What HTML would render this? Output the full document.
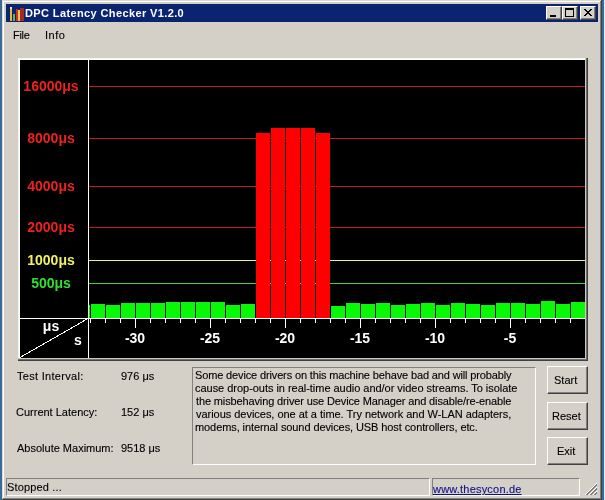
<!DOCTYPE html>
<html><head><meta charset="utf-8">
<style>
*{margin:0;padding:0;box-sizing:border-box}
html,body{width:605px;height:500px;overflow:hidden;background:#3a6a98;font-family:"Liberation Sans",sans-serif;font-size:11px;color:#000}
.a{position:absolute}
.t{will-change:transform;-webkit-text-stroke:0.12px currentColor;position:absolute;white-space:pre;line-height:13px;font-size:11px}
</style></head><body>
<!-- window frame -->
<div class="a" style="left:2px;top:0;width:600px;height:500px;background:#d4d0c8"></div>
<div class="a" style="left:2px;top:0;width:599px;height:1px;background:#dedad2"></div>
<div class="a" style="left:2px;top:0;width:1px;height:499px;background:#dedad2"></div>
<div class="a" style="left:3px;top:1px;width:597px;height:1px;background:#fff"></div>
<div class="a" style="left:3px;top:1px;width:1px;height:497px;background:#fff"></div>
<div class="a" style="left:600px;top:1px;width:1px;height:498px;background:#808080"></div>
<div class="a" style="left:3px;top:498px;width:598px;height:1px;background:#808080"></div>
<div class="a" style="left:601px;top:0;width:1px;height:500px;background:#404040"></div>
<div class="a" style="left:2px;top:499px;width:600px;height:1px;background:#404040"></div>
<div class="a" style="left:604px;top:0;width:1px;height:500px;background:#dfeef2"></div>

<!-- title bar -->
<div class="a" style="left:6px;top:4px;width:592px;height:18px;background:#0b2470"></div>
<svg class="a" style="left:6px;top:4px" width="20" height="18" shape-rendering="crispEdges">
  <rect x="4" y="3" width="2" height="14" fill="#e0b840"/>
  <rect x="4" y="3" width="2" height="2" fill="#f0e0b0"/>
  <rect x="7" y="10" width="2" height="7" fill="#70b040"/>
  <rect x="10" y="5" width="2" height="12" fill="#c83020"/>
  <rect x="12" y="6" width="2" height="11" fill="#f0c050"/>
  <rect x="14" y="4" width="4" height="13" fill="#a82828"/>
</svg>
<div class="t" style="left:25px;top:7px;color:#fff;font-weight:bold;letter-spacing:0.38px;-webkit-text-stroke:0">DPC Latency Checker V1.2.0</div>
<!-- caption buttons -->
<div class="a" style="left:546px;top:6px;width:16px;height:14px;background:#d4d0c8;border-top:1px solid #fff;border-left:1px solid #fff;border-right:1px solid #404040;border-bottom:1px solid #404040;box-shadow:inset -1px -1px 0 #808080"></div>
<div class="a" style="left:550px;top:15px;width:6px;height:2px;background:#000"></div>
<div class="a" style="left:562px;top:6px;width:16px;height:14px;background:#d4d0c8;border-top:1px solid #fff;border-left:1px solid #fff;border-right:1px solid #404040;border-bottom:1px solid #404040;box-shadow:inset -1px -1px 0 #808080"></div>
<div class="a" style="left:565px;top:8px;width:9px;height:9px;border:1px solid #000;border-top-width:2px"></div>
<div class="a" style="left:580px;top:6px;width:16px;height:14px;background:#d4d0c8;border-top:1px solid #fff;border-left:1px solid #fff;border-right:1px solid #404040;border-bottom:1px solid #404040;box-shadow:inset -1px -1px 0 #808080"></div>
<svg class="a" style="left:584px;top:9px" width="8" height="7" shape-rendering="crispEdges">
  <path d="M0 0h2v1h-2zM6 0h2v1h-2zM1 1h2v1h-2zM5 1h2v1h-2zM2 2h4v1h-4zM3 3h2v1h-2zM2 4h4v1h-4zM1 5h2v1h-2zM5 5h2v1h-2zM0 6h2v1h-2zM6 6h2v1h-2z" fill="#000"/>
</svg>

<!-- menu -->
<div class="t" style="left:13px;top:29px;letter-spacing:-0.3px">File</div>
<div class="t" style="left:45px;top:29px;letter-spacing:0.5px">Info</div>

<!-- chart frame -->
<div class="a" style="left:18px;top:58px;width:570px;height:303px;background:#404040"></div>
<div class="a" style="left:18px;top:58px;width:569px;height:302px;background:#707070"></div>
<div class="a" style="left:18px;top:58px;width:568px;height:301px;background:#c8c8c4"></div>
<div class="a" style="left:18px;top:58px;width:567px;height:300px;background:#f4f4f0"></div>
<div class="a" style="left:19px;top:59px;width:566px;height:299px;background:#fff"></div>

<svg class="a" style="left:20px;top:60px" width="565" height="298" shape-rendering="crispEdges">
  <rect x="0" y="0" width="565" height="298" fill="#000"/>
  <g transform="translate(-20,-60)">
  <!-- grid -->
  <rect x="89" y="86" width="496" height="1" fill="#c01c20"/>
  <rect x="89" y="138" width="496" height="1" fill="#c01c20"/>
  <rect x="89" y="186" width="496" height="1" fill="#c01c20"/>
  <rect x="89" y="227" width="496" height="1" fill="#c01c20"/>
  <rect x="89" y="260" width="496" height="1" fill="#f0f080"/>
  <rect x="89" y="283" width="496" height="1" fill="#40d040"/>
  <g><rect x="89" y="305" width="1" height="13" fill="#08f808"/><rect x="91" y="304" width="14" height="14" fill="#08f808"/><rect x="106" y="305" width="14" height="13" fill="#08f808"/><rect x="121" y="303" width="14" height="15" fill="#08f808"/><rect x="136" y="303" width="14" height="15" fill="#08f808"/><rect x="151" y="303" width="14" height="15" fill="#08f808"/><rect x="166" y="302" width="14" height="16" fill="#08f808"/><rect x="181" y="302" width="14" height="16" fill="#08f808"/><rect x="196" y="302" width="14" height="16" fill="#08f808"/><rect x="211" y="302" width="14" height="16" fill="#08f808"/><rect x="226" y="305" width="14" height="13" fill="#08f808"/><rect x="241" y="304" width="14" height="14" fill="#08f808"/><rect x="256" y="133" width="14" height="185" fill="#ff0000"/><rect x="271" y="128" width="14" height="190" fill="#ff0000"/><rect x="286" y="128" width="14" height="190" fill="#ff0000"/><rect x="301" y="128" width="14" height="190" fill="#ff0000"/><rect x="316" y="133" width="14" height="185" fill="#ff0000"/><rect x="331" y="306" width="14" height="12" fill="#08f808"/><rect x="346" y="303" width="14" height="15" fill="#08f808"/><rect x="361" y="304" width="14" height="14" fill="#08f808"/><rect x="376" y="303" width="14" height="15" fill="#08f808"/><rect x="391" y="305" width="14" height="13" fill="#08f808"/><rect x="406" y="304" width="14" height="14" fill="#08f808"/><rect x="421" y="303" width="14" height="15" fill="#08f808"/><rect x="436" y="305" width="14" height="13" fill="#08f808"/><rect x="451" y="303" width="14" height="15" fill="#08f808"/><rect x="466" y="304" width="14" height="14" fill="#08f808"/><rect x="481" y="305" width="14" height="13" fill="#08f808"/><rect x="496" y="303" width="14" height="15" fill="#08f808"/><rect x="511" y="303" width="14" height="15" fill="#08f808"/><rect x="526" y="304" width="14" height="14" fill="#08f808"/><rect x="541" y="301" width="14" height="17" fill="#08f808"/><rect x="556" y="304" width="14" height="14" fill="#08f808"/><rect x="571" y="302" width="14" height="16" fill="#08f808"/></g>
  <!-- axes -->
  <rect x="88" y="60" width="1" height="298" fill="#fff"/>
  <rect x="20" y="318" width="565" height="1" fill="#fff"/>
  <g><rect x="90" y="319" width="1" height="4" fill="#fff"/><rect x="105" y="319" width="1" height="4" fill="#fff"/><rect x="120" y="319" width="1" height="4" fill="#fff"/><rect x="135" y="319" width="1" height="9" fill="#fff"/><rect x="150" y="319" width="1" height="4" fill="#fff"/><rect x="165" y="319" width="1" height="4" fill="#fff"/><rect x="180" y="319" width="1" height="4" fill="#fff"/><rect x="195" y="319" width="1" height="4" fill="#fff"/><rect x="210" y="319" width="1" height="9" fill="#fff"/><rect x="225" y="319" width="1" height="4" fill="#fff"/><rect x="240" y="319" width="1" height="4" fill="#fff"/><rect x="255" y="319" width="1" height="4" fill="#fff"/><rect x="270" y="319" width="1" height="4" fill="#fff"/><rect x="285" y="319" width="1" height="9" fill="#fff"/><rect x="300" y="319" width="1" height="4" fill="#fff"/><rect x="315" y="319" width="1" height="4" fill="#fff"/><rect x="330" y="319" width="1" height="4" fill="#fff"/><rect x="345" y="319" width="1" height="4" fill="#fff"/><rect x="360" y="319" width="1" height="9" fill="#fff"/><rect x="375" y="319" width="1" height="4" fill="#fff"/><rect x="390" y="319" width="1" height="4" fill="#fff"/><rect x="405" y="319" width="1" height="4" fill="#fff"/><rect x="420" y="319" width="1" height="4" fill="#fff"/><rect x="435" y="319" width="1" height="9" fill="#fff"/><rect x="450" y="319" width="1" height="4" fill="#fff"/><rect x="465" y="319" width="1" height="4" fill="#fff"/><rect x="480" y="319" width="1" height="4" fill="#fff"/><rect x="495" y="319" width="1" height="4" fill="#fff"/><rect x="510" y="319" width="1" height="9" fill="#fff"/><rect x="525" y="319" width="1" height="4" fill="#fff"/><rect x="540" y="319" width="1" height="4" fill="#fff"/><rect x="555" y="319" width="1" height="4" fill="#fff"/><rect x="570" y="319" width="1" height="4" fill="#fff"/></g>
  <line x1="20" y1="357.5" x2="88" y2="318.5" stroke="#fff" stroke-width="1"/>
  </g>
</svg>
<svg class="a" style="left:20px;top:60px;will-change:transform" width="565" height="298">
  <g transform="translate(-20,-60)" font-family="Liberation Sans" font-weight="bold" font-size="14" text-anchor="middle">
  <text x="51" y="91" fill="#ee2020">16000μs</text>
  <text x="51" y="143" fill="#ee2020">8000μs</text>
  <text x="51" y="191" fill="#ee2020">4000μs</text>
  <text x="51" y="232" fill="#ee2020">2000μs</text>
  <text x="51" y="265" fill="#f0f060">1000μs</text>
  <text x="51" y="288" fill="#30e030">500μs</text>
  <text x="51" y="331" fill="#fff">μs</text>
  <text x="78" y="345" fill="#fff">s</text>
  <text x="135" y="343" fill="#fff">-30</text>
  <text x="210" y="343" fill="#fff">-25</text>
  <text x="285" y="343" fill="#fff">-20</text>
  <text x="360" y="343" fill="#fff">-15</text>
  <text x="435" y="343" fill="#fff">-10</text>
  <text x="510" y="343" fill="#fff">-5</text>
  </g>
</svg>

<!-- info labels -->
<div class="t" style="left:17px;top:370px;letter-spacing:0.3px">Test Interval:</div>
<div class="t" style="left:121px;top:370px">976 μs</div>
<div class="t" style="left:16px;top:406px">Current Latency:</div>
<div class="t" style="left:121px;top:406px">152 μs</div>
<div class="t" style="left:17px;top:442px">Absolute Maximum:</div>
<div class="t" style="left:121px;top:442px">9518 μs</div>

<!-- message box -->
<div class="a" style="left:192px;top:367px;width:344px;height:98px;border-top:1px solid #808080;border-left:1px solid #808080;border-right:1px solid #fff;border-bottom:1px solid #fff"></div>
<div class="t" style="left:195px;top:369px;letter-spacing:-0.14px">Some device drivers on this machine behave bad and will probably</div>
<div class="t" style="left:195px;top:382px;letter-spacing:-0.03px">cause drop-outs in real-time audio and/or video streams. To isolate</div>
<div class="t" style="left:196px;top:395px;letter-spacing:-0.13px">the misbehaving driver use Device Manager and disable/re-enable</div>
<div class="t" style="left:196px;top:408px;letter-spacing:-0.03px">various devices, one at a time. Try network and W-LAN adapters,</div>
<div class="t" style="left:195px;top:421px;letter-spacing:-0.09px">modems, internal sound devices, USB host controllers, etc.</div>


<!-- buttons -->
<div class="a" style="left:547px;top:366px;width:41px;height:28px;border-top:1px solid #fff;border-left:1px solid #fff;border-right:1px solid #404040;border-bottom:1px solid #404040;box-shadow:inset -1px -1px 0 #808080"></div>
<div class="t" style="left:554px;top:374px">Start</div>
<div class="a" style="left:547px;top:402px;width:41px;height:28px;border-top:1px solid #fff;border-left:1px solid #fff;border-right:1px solid #404040;border-bottom:1px solid #404040;box-shadow:inset -1px -1px 0 #808080"></div>
<div class="t" style="left:552px;top:410px">Reset</div>
<div class="a" style="left:547px;top:437px;width:41px;height:28px;border-top:1px solid #fff;border-left:1px solid #fff;border-right:1px solid #404040;border-bottom:1px solid #404040;box-shadow:inset -1px -1px 0 #808080"></div>
<div class="t" style="left:557px;top:445px">Exit</div>

<!-- status bar -->
<div class="a" style="left:6px;top:478px;width:424px;height:18px;border-top:1px solid #808080;border-left:1px solid #808080;border-right:1px solid #fff;border-bottom:1px solid #fff"></div>
<div class="t" style="left:7px;top:481px;letter-spacing:0.15px">Stopped ...</div>
<div class="a" style="left:432px;top:478px;width:148px;height:18px;border-top:1px solid #808080;border-left:1px solid #808080;border-right:1px solid #fff;border-bottom:1px solid #fff"></div>
<div class="t" style="left:433px;top:483px;color:#101088;text-decoration:underline;letter-spacing:0.2px">www.thesycon.de</div>
<svg class="a" style="left:0;top:0" width="605" height="500" shape-rendering="crispEdges"><rect x="585" y="494" width="1" height="1" fill="#fff"/><rect x="586" y="493" width="1" height="1" fill="#fff"/><rect x="586" y="494" width="1" height="1" fill="#808080"/><rect x="587" y="492" width="1" height="1" fill="#fff"/><rect x="587" y="493" width="1" height="1" fill="#808080"/><rect x="587" y="494" width="1" height="1" fill="#808080"/><rect x="588" y="491" width="1" height="1" fill="#fff"/><rect x="588" y="492" width="1" height="1" fill="#808080"/><rect x="588" y="493" width="1" height="1" fill="#808080"/><rect x="589" y="490" width="1" height="1" fill="#fff"/><rect x="589" y="491" width="1" height="1" fill="#808080"/><rect x="589" y="492" width="1" height="1" fill="#808080"/><rect x="589" y="494" width="1" height="1" fill="#fff"/><rect x="590" y="489" width="1" height="1" fill="#fff"/><rect x="590" y="490" width="1" height="1" fill="#808080"/><rect x="590" y="491" width="1" height="1" fill="#808080"/><rect x="590" y="493" width="1" height="1" fill="#fff"/><rect x="590" y="494" width="1" height="1" fill="#808080"/><rect x="591" y="488" width="1" height="1" fill="#fff"/><rect x="591" y="489" width="1" height="1" fill="#808080"/><rect x="591" y="490" width="1" height="1" fill="#808080"/><rect x="591" y="492" width="1" height="1" fill="#fff"/><rect x="591" y="493" width="1" height="1" fill="#808080"/><rect x="591" y="494" width="1" height="1" fill="#808080"/><rect x="592" y="487" width="1" height="1" fill="#fff"/><rect x="592" y="488" width="1" height="1" fill="#808080"/><rect x="592" y="489" width="1" height="1" fill="#808080"/><rect x="592" y="491" width="1" height="1" fill="#fff"/><rect x="592" y="492" width="1" height="1" fill="#808080"/><rect x="592" y="493" width="1" height="1" fill="#808080"/><rect x="593" y="486" width="1" height="1" fill="#fff"/><rect x="593" y="487" width="1" height="1" fill="#808080"/><rect x="593" y="488" width="1" height="1" fill="#808080"/><rect x="593" y="490" width="1" height="1" fill="#fff"/><rect x="593" y="491" width="1" height="1" fill="#808080"/><rect x="593" y="492" width="1" height="1" fill="#808080"/><rect x="593" y="494" width="1" height="1" fill="#fff"/><rect x="594" y="485" width="1" height="1" fill="#fff"/><rect x="594" y="486" width="1" height="1" fill="#808080"/><rect x="594" y="487" width="1" height="1" fill="#808080"/><rect x="594" y="489" width="1" height="1" fill="#fff"/><rect x="594" y="490" width="1" height="1" fill="#808080"/><rect x="594" y="491" width="1" height="1" fill="#808080"/><rect x="594" y="493" width="1" height="1" fill="#fff"/><rect x="594" y="494" width="1" height="1" fill="#808080"/><rect x="595" y="484" width="1" height="1" fill="#fff"/><rect x="595" y="485" width="1" height="1" fill="#808080"/><rect x="595" y="486" width="1" height="1" fill="#808080"/><rect x="595" y="488" width="1" height="1" fill="#fff"/><rect x="595" y="489" width="1" height="1" fill="#808080"/><rect x="595" y="490" width="1" height="1" fill="#808080"/><rect x="595" y="492" width="1" height="1" fill="#fff"/><rect x="595" y="493" width="1" height="1" fill="#808080"/><rect x="595" y="494" width="1" height="1" fill="#808080"/><rect x="596" y="483" width="1" height="1" fill="#fff"/><rect x="596" y="484" width="1" height="1" fill="#808080"/><rect x="596" y="485" width="1" height="1" fill="#808080"/><rect x="596" y="487" width="1" height="1" fill="#fff"/><rect x="596" y="488" width="1" height="1" fill="#808080"/><rect x="596" y="489" width="1" height="1" fill="#808080"/><rect x="596" y="491" width="1" height="1" fill="#fff"/><rect x="596" y="492" width="1" height="1" fill="#808080"/><rect x="596" y="493" width="1" height="1" fill="#808080"/></svg>
</body></html>
